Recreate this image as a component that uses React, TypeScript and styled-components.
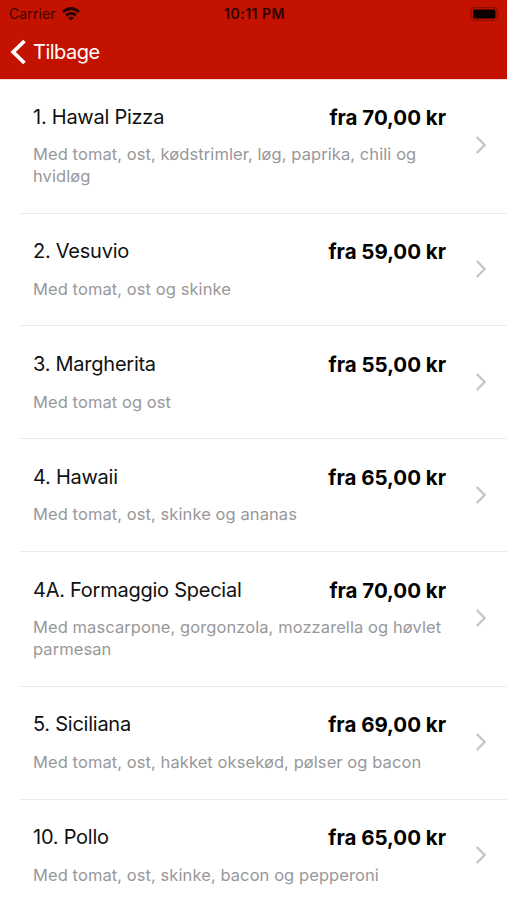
import React from "react";
import styled, { createGlobalStyle } from "styled-components";

const Global = createGlobalStyle`
  *, *::before, *::after { box-sizing: border-box; }
  body { margin: 0; background: #fff; font-family: Inter, sans-serif; }
`;
const Screen = styled.main`
  width: 507px; height: 900px; overflow: hidden; background: #fff;
`;
const Header = styled.header`
  height: 79px; background: #c41200; box-shadow: 0 1px 0 #fbdcd9;
`;
const StatusBar = styled.div`
  display: grid; grid-template-columns: 1fr auto 1fr; align-items: center;
  height: 27px; padding: 0 7px 0 9px; color: #3a0500;
`;
const Carrier = styled.div`
  display: flex; align-items: center; gap: 6px;
`;
const CarrierName = styled.span`
  width: 47px; white-space: nowrap; font-size: 14px; letter-spacing: 0.1px;
`;
const Clock = styled.time`
  font-size: 14px; font-weight: 600; letter-spacing: 0.5px; color: #2c0300;
`;
const BatterySlot = styled.div`
  display: flex; justify-content: flex-end;
`;
const Back = styled.button`
  display: flex; align-items: center; gap: 7px; height: 50px; padding: 0 0 0 10px;
  border: 0; background: none; color: #fff; font: 400 20px Inter, sans-serif; letter-spacing: -0.5px;
`;
const List = styled.ul`
  margin: 0; padding: 0 0 0 20px; list-style: none;
`;
const Row = styled.li<{ $tall?: boolean }>`
  display: grid; grid-template-columns: 1fr 14px; column-gap: 28px; align-items: center;
  height: ${(p) => (p.$tall ? 134.7 : 112.8)}px; padding: 0 19px 0 13px;
  border-bottom: 1px solid #ebebec;
`;
const Heading = styled.div`
  display: flex; justify-content: space-between; height: 26px; line-height: 26px;
`;
const Name = styled.h2`
  margin: -1px 0 0; font-size: 20px; font-weight: 400; letter-spacing: -0.25px; color: #111;
`;
const Price = styled.strong`
  font-size: 20.5px; font-weight: 700; letter-spacing: -0.02px; color: #000;
`;
const Description = styled.p`
  margin: 12.5px 0 0; font-size: 16.5px; line-height: 22px; letter-spacing: 0.08px;
  color: #98989a; white-space: pre-line;
`;
const Chevron = styled.svg`
  margin-bottom: 1px;
`;

const dishes = [
  { name: "1. Hawal Pizza", price: "fra 70,00 kr", text: "Med tomat, ost, kødstrimler, løg, paprika, chili og\nhvidløg", tall: true },
  { name: "2. Vesuvio", price: "fra 59,00 kr", text: "Med tomat, ost og skinke" },
  { name: "3. Margherita", price: "fra 55,00 kr", text: "Med tomat og ost" },
  { name: "4. Hawaii", price: "fra 65,00 kr", text: "Med tomat, ost, skinke og ananas" },
  { name: "4A. Formaggio Special", price: "fra 70,00 kr", text: "Med mascarpone, gorgonzola, mozzarella og høvlet\nparmesan", tall: true },
  { name: "5. Siciliana", price: "fra 69,00 kr", text: "Med tomat, ost, hakket oksekød, pølser og bacon" },
  { name: "10. Pollo", price: "fra 65,00 kr", text: "Med tomat, ost, skinke, bacon og pepperoni" },
];

export default function App() {
  return (
    <>
      <Global />
      <Screen>
        <Header>
          <StatusBar>
            <Carrier>
              <CarrierName>Carrier</CarrierName>
              <svg width="18" height="14" viewBox="0 0 18 14" fill="none" stroke="#240300" strokeWidth="2.7">
                <path d="M1 5Q9-2 17 5M4 8.4Q9 4.4 14 8.4" />
                <path d="M6.2 10.7Q9 8.7 11.8 10.7L9 13.6Z" fill="#240300" stroke="none" />
              </svg>
            </Carrier>
            <Clock>10:11 PM</Clock>
            <BatterySlot>
              <svg width="30" height="14" viewBox="0 0 30 14">
                <rect x="1" y=".7" width="26" height="12.6" rx="3.5" fill="none" stroke="#920d00" strokeWidth="1.2" />
                <rect x="3" y="2.5" width="22.5" height="9" rx="1.5" fill="#0c0000" />
                <path d="M28.2 4.8Q30 7 28.2 9.2Z" fill="#920d00" />
              </svg>
            </BatterySlot>
          </StatusBar>
          <Back>
            <svg width="16" height="26" viewBox="0 0 16 26" fill="none" stroke="#fff" strokeWidth="3.8">
              <path d="M14.5 2L3.2 13L14.5 24" />
            </svg>
            Tilbage
          </Back>
        </Header>
        <List>
          {dishes.map((d) => (
            <Row key={d.name} $tall={d.tall}>
              <div>
                <Heading><Name>{d.name}</Name><Price>{d.price}</Price></Heading>
                <Description>{d.text}</Description>
              </div>
              <Chevron width="14" height="20" viewBox="0 0 14 20" fill="none" stroke="#c5c5c8" strokeWidth="2.3">
                <path d="M2.8 2L10.6 10L2.8 18" />
              </Chevron>
            </Row>
          ))}
        </List>
      </Screen>
    </>
  );
}
